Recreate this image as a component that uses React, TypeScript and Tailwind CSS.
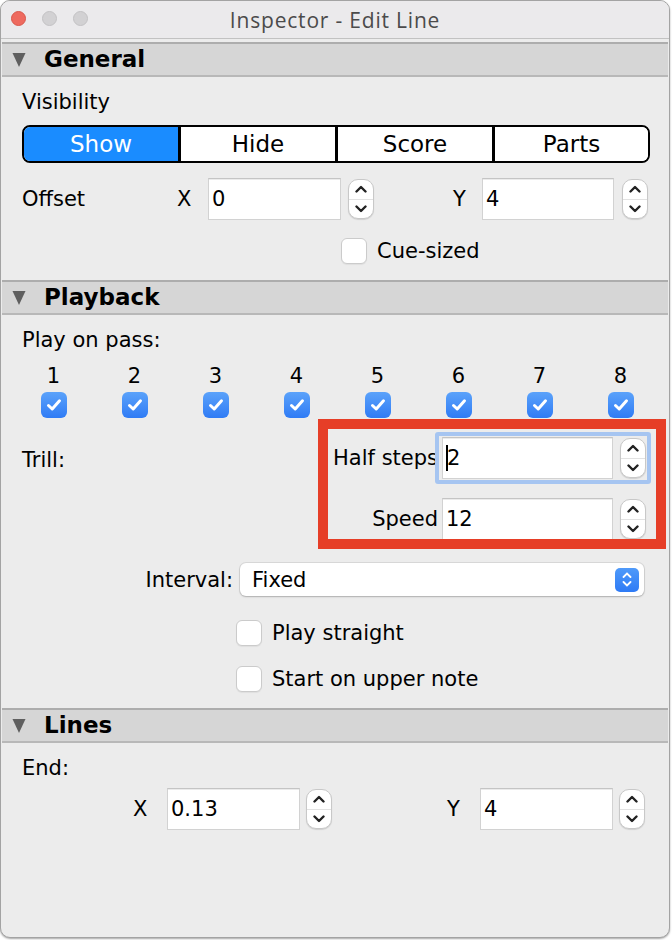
import React from "react"

const PASSES = [1, 2, 3, 4, 5, 6, 7, 8]
const SEGMENTS = [
  { label: "Show", w: "w-[154px]", active: true },
  { label: "Hide", w: "w-[157px]", active: false },
  { label: "Score", w: "w-[157px]", active: false },
  { label: "Parts", w: "flex-1", active: false },
]

function Chevron({ up }: { up?: boolean }) {
  return (
    <svg width="12" height="8" viewBox="0 0 12 8">
      <path
        d={up ? "M1.5 6.5 L6 2 L10.5 6.5" : "M1.5 1.5 L6 6 L10.5 1.5"}
        stroke="#222"
        strokeWidth="2.4"
        fill="none"
        strokeLinecap="round"
        strokeLinejoin="round"
      />
    </svg>
  )
}

function Stepper() {
  return (
    <div className="flex h-[40px] w-[26px] shrink-0 flex-col items-center justify-between rounded-[10px] border border-[#c8c8c8] bg-white py-[5px] shadow-[0_1px_1px_rgba(0,0,0,0.12)]">
      <Chevron up />
      <div className="h-px w-full bg-[#e2e2e2]" />
      <Chevron />
    </div>
  )
}

function Field({ value, w = "w-[133px]", caret }: { value: string; w?: string; caret?: boolean }) {
  return (
    <div
      className={`flex h-[42px] ${w} shrink-0 items-center border border-[#d2d2d2] border-t-[#c4c4c4] bg-white pl-[3px] text-[21px] shadow-[inset_0_1px_0_#ebebeb]`}
    >
      {caret && <span className="mr-[-1px] h-[26px] w-[2px] bg-black" />}
      {value}
    </div>
  )
}

function Check({ checked }: { checked?: boolean }) {
  if (!checked)
    return (
      <div className="h-[26px] w-[26px] shrink-0 rounded-[6px] border border-[#cbcbcb] bg-white shadow-[0_1px_1px_rgba(0,0,0,0.06)]" />
    )
  return (
    <div className="flex h-[26px] w-[26px] shrink-0 items-center justify-center rounded-[6px] bg-linear-to-b from-[#5ba2fa] to-[#2f7bf5]">
      <svg width="16" height="14" viewBox="0 0 16 14">
        <path
          d="M2.5 7.5 L6.2 11 L13.5 2.8"
          stroke="white"
          strokeWidth="3"
          fill="none"
          strokeLinecap="round"
          strokeLinejoin="round"
        />
      </svg>
    </div>
  )
}

function SectionHeader({ title, className = "" }: { title: string; className?: string }) {
  return (
    <div
      className={`mx-[1px] flex h-[35px] shrink-0 items-center border-y-2 border-t-[#adadad] border-b-[#b8b8b8] bg-[#d6d6d6] ${className}`}
    >
      <svg width="14" height="15" viewBox="0 0 14 15" className="ml-[10px]">
        <polygon points="0.5,1 13.5,1 7,15" fill="#5f5f5f" />
      </svg>
      <span className="ml-[18px] text-[23px] font-bold leading-none text-black">{title}</span>
    </div>
  )
}

export default function App() {
  return (
    <div className="relative h-[940px] w-[672px] bg-white font-['DejaVu_Sans',sans-serif] text-[21px] leading-[24px] text-black">
      <div className="flex h-[938px] w-[670px] flex-col overflow-hidden rounded-[10px] border border-[#a3a3a3] bg-[#ececec] shadow-[0_1px_2px_rgba(0,0,0,0.35)]">
        {/* title bar */}
        <div className="relative flex h-[38px] shrink-0 items-center justify-center border-b border-[#c2c2c2] bg-[#ebeaec]">
          <div className="absolute left-[10px] top-[10px] flex gap-[16px]">
            <span className="h-[15px] w-[15px] rounded-full border border-[#d9574b] bg-[#ee6a5f]" />
            <span className="h-[15px] w-[15px] rounded-full border border-[#c3c2c4] bg-[#d2d1d3]" />
            <span className="h-[15px] w-[15px] rounded-full border border-[#c3c2c4] bg-[#d2d1d3]" />
          </div>
          <span className="font-['Open_Sans',sans-serif] text-[21px] tracking-[0.8px] text-[#4b4b4b]">
            Inspector - Edit Line
          </span>
        </div>

        <SectionHeader title="General" className="mt-[3px]" />
        <div className="ml-[21px] mt-[13px] h-[24px]">Visibility</div>

        {/* segmented control */}
        <div className="ml-[21px] mt-[11px] flex h-[38px] w-[628px] shrink-0 overflow-hidden rounded-[8px] border-[2.5px] border-black bg-white">
          {SEGMENTS.map((s, i) => (
            <div
              key={s.label}
              className={`flex ${s.w} items-center justify-center text-[23px] ${
                i > 0 ? "border-l-[3px] border-black" : ""
              } ${s.active ? "bg-[#1a8cff] text-white" : "bg-white text-black"}`}
            >
              {s.label}
            </div>
          ))}
        </div>

        {/* offset */}
        <div className="ml-[21px] mt-[15px] flex items-center">
          <span className="w-[155px]">Offset</span>
          <span className="w-[31px]">X</span>
          <Field value="0" />
          <div className="ml-[7px]">
            <Stepper />
          </div>
          <span className="ml-[79px] w-[29px]">Y</span>
          <Field value="4" w="w-[132px]" />
          <div className="ml-[8px]">
            <Stepper />
          </div>
        </div>

        <div className="ml-[340px] mt-[18px] flex items-center gap-[10px]">
          <Check />
          <span>Cue-sized</span>
        </div>

        <SectionHeader title="Playback" className="mt-[16px]" />
        <div className="ml-[21px] mt-[13px] h-[24px]">Play on pass:</div>

        <div className="ml-[12px] mt-[12px] grid w-[648px] grid-cols-8">
          {PASSES.map((n) => (
            <div key={n} className="flex flex-col items-center">
              <span className="h-[24px]">{n}</span>
              <div className="mt-[4px]">
                <Check checked />
              </div>
            </div>
          ))}
        </div>

        {/* trill */}
        <div className="ml-[21px] mt-[14px] flex items-center">
          <span className="w-[296px] pt-[4px]">Trill:</span>
          <span className="w-[120px] text-right">Half steps</span>
          <div className="ml-[-3px] flex items-center rounded-[3px] border-[4px] border-[#a6c5f1] py-[1px] pl-[3px] pr-[1px]">
            <Field value="2" w="w-[171px]" caret />
            <div className="ml-[7px]">
              <Stepper />
            </div>
          </div>
        </div>
        <div className="ml-[317px] mt-[9px] flex items-center">
          <span className="w-[120px] text-right">Speed</span>
          <div className="ml-[-3px] flex items-center border-[4px] border-transparent py-[1px] pl-[3px] pr-[1px]">
            <Field value="12" w="w-[171px]" />
            <div className="ml-[7px]">
              <Stepper />
            </div>
          </div>
        </div>

        {/* interval */}
        <div className="ml-[21px] mt-[18px] flex items-center">
          <span className="w-[211px] text-right">Interval:</span>
          <div className="ml-[7px] flex h-[33px] w-[404px] items-center justify-between rounded-[6px] bg-white pl-[12px] pr-[5px] shadow-[0_0_0_1px_rgba(0,0,0,0.08),0_1px_2px_rgba(0,0,0,0.2)]">
            <span>Fixed</span>
            <div className="flex h-[24px] w-[24px] flex-col items-center justify-center gap-[3px] rounded-[5px] bg-linear-to-b from-[#4f9afa] to-[#2e7af5]">
              <svg width="10" height="6" viewBox="0 0 10 6">
                <path d="M1.5 5 L5 1.5 L8.5 5" stroke="white" strokeWidth="1.8" fill="none" strokeLinecap="round" />
              </svg>
              <svg width="10" height="6" viewBox="0 0 10 6">
                <path d="M1.5 1 L5 4.5 L8.5 1" stroke="white" strokeWidth="1.8" fill="none" strokeLinecap="round" />
              </svg>
            </div>
          </div>
        </div>

        <div className="ml-[235px] mt-[24px] flex items-center gap-[10px]">
          <Check />
          <span>Play straight</span>
        </div>
        <div className="ml-[235px] mt-[20px] flex items-center gap-[10px]">
          <Check />
          <span>Start on upper note</span>
        </div>

        <SectionHeader title="Lines" className="mt-[16px]" />
        <div className="ml-[21px] mt-[13px] h-[24px]">End:</div>

        <div className="ml-[132px] mt-[8px] flex items-center">
          <span className="w-[34px]">X</span>
          <Field value="0.13" />
          <div className="ml-[6px]">
            <Stepper />
          </div>
          <span className="ml-[115px] w-[33px]">Y</span>
          <Field value="4" />
          <div className="ml-[6px]">
            <Stepper />
          </div>
        </div>
      </div>

      {/* red annotation frame */}
      <div className="pointer-events-none absolute left-[318px] top-[419px] h-[130px] w-[348px] border-[10px] border-[#e63e27]" />
    </div>
  )
}
